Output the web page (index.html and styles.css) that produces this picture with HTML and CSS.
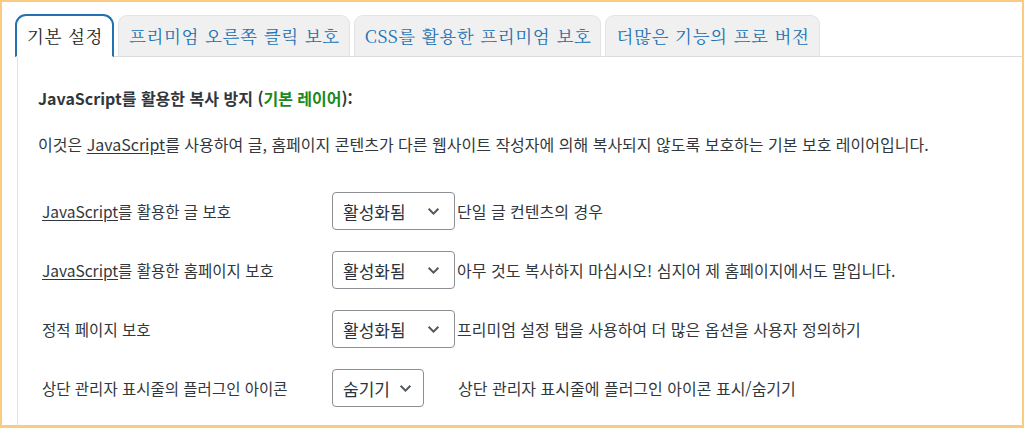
FILE: index.html
```html
<!DOCTYPE html>
<html lang="ko">
<head>
<meta charset="utf-8">
<link rel="stylesheet" href="styles.css">
</head>
<body>
<div class="frame">
  <nav class="tabs">
    <a class="tab active">기본 설정</a>
    <a class="tab">프리미엄 오른쪽 클릭 보호</a>
    <a class="tab">CSS를 활용한 프리미엄 보호</a>
    <a class="tab">더많은 기능의 프로 버전</a>
  </nav>
  <section class="panel">
    <h3 class="heading">JavaScript를 활용한 복사 방지 (<span class="green">기본 레이어</span>):</h3>
    <p class="intro">이것은 <u>JavaScript</u>를 사용하여 글, 홈페이지 콘텐츠가 다른 웹사이트 작성자에 의해 복사되지 않도록 보호하는 기본 보호 레이어입니다.</p>
    <div class="rows">
      <div class="row">
        <div class="label"><u>JavaScript</u>를 활용한 글 보호</div>
        <div class="select wide"><span>활성화됨</span><svg class="chev" viewBox="0 0 12 8"><path d="M1.5 1.5 6 6l4.5-4.5"/></svg></div>
        <div class="desc">단일 글 컨텐츠의 경우</div>
      </div>
      <div class="row">
        <div class="label"><u>JavaScript</u>를 활용한 홈페이지 보호</div>
        <div class="select wide"><span>활성화됨</span><svg class="chev" viewBox="0 0 12 8"><path d="M1.5 1.5 6 6l4.5-4.5"/></svg></div>
        <div class="desc">아무 것도 복사하지 마십시오! 심지어 제 홈페이지에서도 말입니다.</div>
      </div>
      <div class="row">
        <div class="label">정적 페이지 보호</div>
        <div class="select wide"><span>활성화됨</span><svg class="chev" viewBox="0 0 12 8"><path d="M1.5 1.5 6 6l4.5-4.5"/></svg></div>
        <div class="desc">프리미엄 설정 탭을 사용하여 더 많은 옵션을 사용자 정의하기</div>
      </div>
      <div class="row">
        <div class="label">상단 관리자 표시줄의 플러그인 아이콘</div>
        <div class="select narrow"><span>숨기기</span><svg class="chev" viewBox="0 0 12 8"><path d="M1.5 1.5 6 6l4.5-4.5"/></svg></div>
        <div class="desc spaced">상단 관리자 표시줄에 플러그인 아이콘 표시/숨기기</div>
      </div>
    </div>
  </section>
</div>
</body>
</html>
```
FILE: styles.css
```css
* { box-sizing: border-box; }
html, body { margin: 0; padding: 0; background: #fff; }
body {
  width: 1024px;
  height: 428px;
  overflow: hidden;
  font-family: "Noto Sans CJK KR", "Noto Sans", sans-serif;
  color: #32373c;
}
.frame {
  width: 1024px;
  height: 428px;
  border: 2px solid #fbcb80;
  border-bottom-width: 3px;
  padding: 12px 0 0 13px;
  display: flex;
  flex-direction: column;
  background: #fff;
}
.tabs {
  display: flex;
  align-items: flex-end;
  gap: 4px;
  border-bottom: 1px solid #dcdcde;
  height: 43px;
}
.tab {
  display: flex;
  align-items: center;
  height: 42px;
  margin-bottom: -1px;
  padding: 0 9px 2px 10px;
  font-family: "Noto Serif CJK KR", "Liberation Serif", serif;
  font-size: 17.5px;
  color: #2271b1;
  background: #f0f0f1;
  border: 1px solid #e2e3e5;
  border-bottom: 1px solid #dcdcde;
  border-radius: 9px 9px 0 0;
  white-space: nowrap;
  letter-spacing: 0.6px;
}
.tab.active {
  color: #1d2327;
  background: #fff;
  border: 2px solid #2271b1;
  border-bottom: 1px solid #fff;
  border-radius: 11px 11px 0 0;
  height: 43px;
  padding: 0 9px 2px 10px;
}
.panel {
  flex: 1;
  margin-left: 2px;
  border-left: 1px solid #e2e3e5;
  padding: 30px 0 0 20px;
  font-size: 16px;
}
.heading {
  margin: 0;
  font-size: 16px;
  font-weight: 700;
  line-height: 22px;
  color: #32373c;
}
.green { color: #1a8a1a; }
.intro {
  margin: 24px 0 0;
  line-height: 22px;
}
.intro u, .label u { text-underline-offset: 2px; }
.rows {
  margin-top: 37px;
  display: flex;
  flex-direction: column;
  gap: 21px;
}
.row {
  display: flex;
  align-items: center;
  height: 38px;
}
.label {
  width: 294px;
  padding-left: 4px;
  flex: none;
  font-size: 15.5px;
}
.select {
  flex: none;
  height: 38px;
  border: 1px solid #8c8f94;
  border-radius: 4px;
  display: flex;
  align-items: center;
  justify-content: space-between;
  padding: 0 14px 0 10px;
  font-size: 17px;
  color: #2c3338;
  background: #fff;
}
.select.wide { width: 123px; }
.select.narrow { width: 92px; padding-right: 11px; }
.chev {
  width: 13px;
  height: 9px;
  fill: none;
  stroke: #50575e;
  stroke-width: 1.8;
}
.desc {
  padding-left: 2px;
  white-space: nowrap;
}
.desc.spaced { padding-left: 34px; }
```
